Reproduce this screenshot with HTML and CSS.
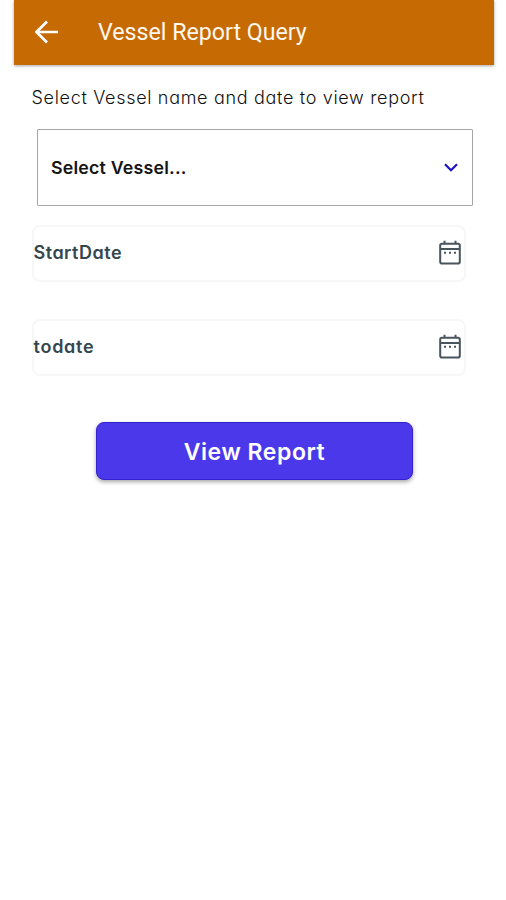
FILE: index.html
```html
<!DOCTYPE html>
<html lang="en">
  <head>
    <meta charset="UTF-8" />
    <meta name="viewport" content="width=device-width, initial-scale=1.0" />
    <title>Vessel Report Query</title>
    <link rel="stylesheet" href="styles.css">
  </head>
  <body>
    <div class="screen">
      <!-- Header -->
      <header class="app-bar">
        <button class="back-btn" aria-label="Back">
          <svg width="24" height="24" viewBox="0 0 24 24">
            <path d="M23 12H2M12 1.5L1.5 12L12 22.5" />
          </svg>
        </button>
        <h1>Vessel Report Query</h1>
      </header>

      <!-- Report Form -->
      <main>
        <p class="hint">Select Vessel name and date to view report</p>

        <button class="vessel-select">
          <span>Select Vessel...</span>
          <svg class="chevron" width="14" height="9" viewBox="0 0 14 9">
            <path d="M1 1.3L7 7.2L13 1.3" />
          </svg>
        </button>

        <button class="date-field start-date">
          <span>StartDate</span>
          <svg class="calendar" width="22" height="25" viewBox="0 0 22 25">
            <rect x="1.2" y="3.8" width="19.6" height="19.8" rx="1.8" />
            <path d="M1.2 9H20.8M5.5 0.8V4M16.5 0.8V4" />
            <path d="M5 12.7H7M10 12.7H12M15 12.7H17" />
          </svg>
        </button>

        <button class="date-field to-date">
          <span>todate</span>
          <svg class="calendar" width="22" height="25" viewBox="0 0 22 25">
            <rect x="1.2" y="3.8" width="19.6" height="19.8" rx="1.8" />
            <path d="M1.2 9H20.8M5.5 0.8V4M16.5 0.8V4" />
            <path d="M5 12.7H7M10 12.7H12M15 12.7H17" />
          </svg>
        </button>

        <button class="view-btn">View Report</button>
      </main>
    </div>
  </body>
</html>
```

FILE: styles.css
```css
/* Basic Reset & Global Styles */
* {
  margin: 0;
  padding: 0;
  box-sizing: border-box;
}
body {
  background-color: #fff;
  font-family: Inter, "Liberation Sans", sans-serif;
  font-feature-settings: "cv11";
}
button {
  font: inherit;
  font-feature-settings: inherit;
  border: none;
  background: none;
  cursor: pointer;
}
svg {
  display: block;
  fill: none;
}
.screen {
  width: 479.5px;
  min-height: 900px;
  margin-left: 14px;
}

/* Header */
.app-bar {
  display: flex;
  align-items: center;
  height: 65px;
  padding: 0 0 1px 20.5px;
  background-color: #c66a04;
  box-shadow: 0 1px 3px rgba(0, 0, 0, 0.35);
}
.back-btn svg {
  stroke: #fff;
  stroke-width: 2.7;
}
.app-bar h1 {
  margin-left: 39.5px;
  font-family: Roboto, sans-serif;
  font-size: 23.2px;
  font-weight: 400;
  line-height: 30px;
  color: #fff8ee;
}

/* Report Form */
main {
  display: flex;
  flex-direction: column;
  padding: 21px 20px 0 17.5px;
}
.hint {
  font-size: 18px;
  font-weight: 300;
  line-height: 24px;
  letter-spacing: 0.68px;
  white-space: nowrap;
  color: #111;
}
.vessel-select {
  display: flex;
  align-items: center;
  justify-content: space-between;
  width: 436px;
  height: 77px;
  margin: 19px 0 0 5.5px;
  padding: 0 14px 0 13px;
  border: 1.5px solid #a6a6a6;
  border-radius: 1px;
  font-size: 17.8px;
  font-weight: 600;
  letter-spacing: 0.2px;
  color: #151515;
}
.chevron {
  stroke: #1c12c4;
  stroke-width: 2.2;
}
.date-field {
  display: flex;
  align-items: center;
  justify-content: space-between;
  width: 434px;
  height: 57px;
  padding: 0 3px 2px 0;
  border: 2px solid #f6f7f7;
  border-radius: 8px;
  font-size: 18px;
  font-weight: 600;
  letter-spacing: 0.5px;
  color: #34474f;
}
.start-date {
  margin-top: 18.5px;
}
.to-date {
  margin-top: 37px;
  letter-spacing: 0.75px;
}
.calendar {
  stroke: #48555c;
  stroke-width: 2;
}

/* View Button */
.view-btn {
  width: 317px;
  height: 58px;
  margin: 46.5px 0 0 64.5px;
  padding-top: 1px;
  border: 1px solid #3520d0;
  border-radius: 8px;
  background-color: #4a38ea;
  box-shadow: 0 2px 4px rgba(0, 0, 0, 0.35);
  font-size: 23px;
  font-weight: 600;
  letter-spacing: 0.55px;
  color: #fff;
}
```
